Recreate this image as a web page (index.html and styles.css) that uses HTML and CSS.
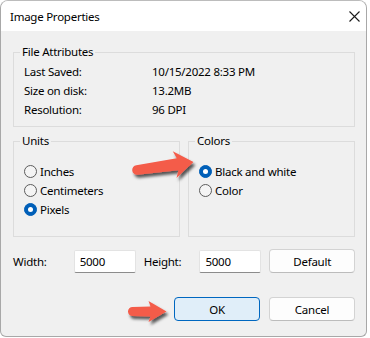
FILE: index.html
```html
<!DOCTYPE html>
<html>
<head>
<meta charset="utf-8">
<link rel="stylesheet" href="styles.css">
</head>
<body>
<div class="window">
  <div class="titlebar">
    <span class="title">Image Properties</span>
    <svg class="close" width="11" height="11" viewBox="0 0 11 11"><path d="M0.5 0.5 L10.5 10.5 M10.5 0.5 L0.5 10.5" stroke="#1a1a1a" stroke-width="1.1" fill="none"/></svg>
  </div>
  <div class="content">
    <fieldset class="group attrs">
      <legend>File Attributes</legend>
      <div class="attr-grid">
        <span>Last Saved:</span><span>10/15/2022 8:33 PM</span>
        <span>Size on disk:</span><span>13.2MB</span>
        <span>Resolution:</span><span>96 DPI</span>
      </div>
    </fieldset>
    <div class="groups">
      <fieldset class="group opts">
        <legend>Units</legend>
        <label class="radio"><input type="radio" name="units"><span>Inches</span></label>
        <label class="radio"><input type="radio" name="units"><span>Centimeters</span></label>
        <label class="radio"><input type="radio" name="units" checked><span>Pixels</span></label>
      </fieldset>
      <fieldset class="group opts">
        <legend>Colors</legend>
        <label class="radio"><input type="radio" name="colors" checked><span>Black and white</span></label>
        <label class="radio"><input type="radio" name="colors"><span>Color</span></label>
      </fieldset>
    </div>
    <div class="size-row">
      <label class="lbl-w">Width:</label>
      <input class="num" type="text" value="5000">
      <label class="lbl-h">Height:</label>
      <input class="num" type="text" value="5000">
      <button class="btn">Default</button>
    </div>
    <div class="actions">
      <button class="btn primary">OK</button>
      <button class="btn">Cancel</button>
    </div>
  </div>
  <svg class="arrows" width="370" height="338" viewBox="0 0 370 338">
    <defs>
      <filter id="sh" x="-20%" y="-40%" width="150%" height="190%">
        <feDropShadow dx="2" dy="3" stdDeviation="1.6" flood-color="#000" flood-opacity="0.65"/>
      </filter>
    </defs>
    <g filter="url(#sh)" fill="#f45b4a">
      <path transform="translate(137 170) rotate(-8)" d="M0,-4.8 L41,-6 L38,-13.5 L57,0 L38,13.5 L41,6 L0,4.8 A4.8,4.8 0 0 1 0,-4.8 Z"/>
      <path transform="translate(132.5 311.5)" d="M0,-4.5 L18,-5 L16,-10.5 L34,0 L16,10.5 L18,5 L0,4.5 A4.5,4.5 0 0 1 0,-4.5 Z"/>
    </g>
  </svg>
</div>
</body>
</html>
```

FILE: styles.css
```css
* { box-sizing: border-box; }
html, body { margin: 0; padding: 0; }
body {
  background: #ffffff;
  font-family: "Noto Sans", "Open Sans", sans-serif;
  font-size: 11.5px;
  letter-spacing: -0.25px;
  color: #000;
  width: 370px;
  height: 338px;
  overflow: hidden;
}
.window {
  position: relative;
  width: 367px;
  height: 337px;
  border: 1px solid #a8a8a8;
  border-top-color: #bcbcbc;
  border-radius: 8px 8px 6px 6px;
  background: #f0f0f0;
  overflow: hidden;
  display: flex;
  flex-direction: column;
}
.titlebar {
  height: 30px;
  flex: none;
  background: #fff;
  display: flex;
  align-items: center;
  justify-content: space-between;
  padding: 1px 6px 0 9px;
}
.title { line-height: 16px; }
.close { display: block; }
.content {
  flex: 1;
  padding: 13px 11px 0 12px;
  display: flex;
  flex-direction: column;
}
.group {
  margin: 0;
  border: 1px solid #dcdcdc;
  min-width: 0;
}
.group legend {
  padding: 0 2px;
  margin-left: -4px;
  line-height: 16px;
}
.attrs { padding: 2px 10px 7px 10px; }
.attr-grid {
  display: grid;
  grid-template-columns: 128px 1fr;
  line-height: 19px;
}
.groups {
  margin-top: 6px;
  display: grid;
  grid-template-columns: 1fr 1fr;
  column-gap: 8px;
}
.opts {
  padding: 13px 10px 0 10px;
  height: 104px;
}
.radio {
  display: flex;
  align-items: center;
  height: 19px;
  gap: 3px;
}
.radio input {
  appearance: none;
  -webkit-appearance: none;
  margin: 0 0 0 0;
  width: 13px;
  height: 13px;
  border-radius: 50%;
  border: 1px solid #5c5c5c;
  background: #f4f4f4;
  flex: none;
  position: relative;
}
.radio input:checked {
  border-color: #005fb8;
  background: #005fb8;
}
.radio input:checked::after {
  content: "";
  position: absolute;
  left: 3px;
  top: 3px;
  width: 5px;
  height: 5px;
  border-radius: 50%;
  background: #fff;
}
.size-row {
  margin-top: 12px;
  display: flex;
  align-items: center;
  height: 24px;
}
.lbl-w { width: 61px; }
.lbl-h { width: 56px; margin-left: 8px; }
.num {
  width: 62px;
  height: 23px;
  margin: 0;
  padding: 0 5px;
  border: 1px solid #e3e3e3;
  border-bottom-color: #8c8c8c;
  border-radius: 2px;
  background: #fff;
  font: inherit;
  letter-spacing: inherit;
  color: #000;
}
.btn {
  width: 86px;
  height: 24px;
  margin: 0;
  padding: 0;
  border: 1px solid #d3d3d3;
  border-bottom-color: #bcbcbc;
  border-radius: 4px;
  background: #fdfdfd;
  font: inherit;
  letter-spacing: inherit;
  color: #000;
}
.size-row .btn { margin-left: 8px; }
.actions {
  margin-top: 24px;
  display: flex;
  justify-content: flex-end;
  gap: 9px;
}
.btn.primary {
  border-color: #0067c0;
  background: #e0eef9;
}
.arrows {
  position: absolute;
  left: -1px;
  top: -1px;
  pointer-events: none;
}
```
